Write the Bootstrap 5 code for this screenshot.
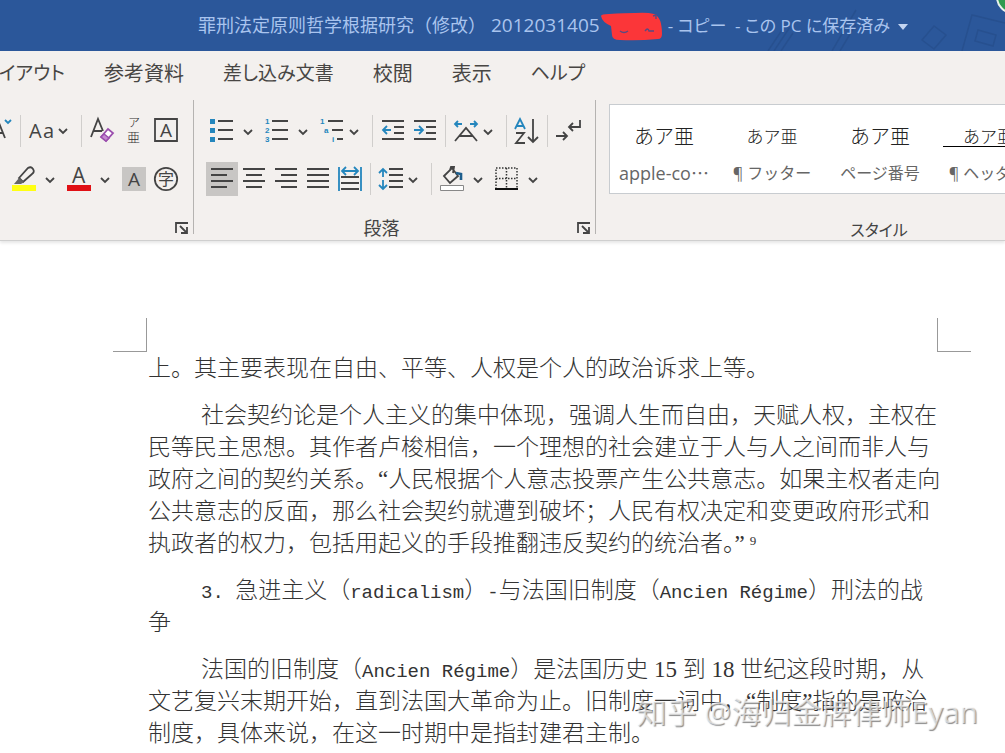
<!DOCTYPE html>
<html lang="ja">
<head>
<meta charset="utf-8">
<meta name="viewport" content="width=device-width, initial-scale=1">
<title>罪刑法定原则哲学根据研究</title>
<link rel="stylesheet" href="https://cdn.jsdelivr.net/npm/bootstrap@5.3.0/dist/css/bootstrap.min.css">
<style>
  body { font-family: "Open Sans", "Noto Sans CJK JP", sans-serif; font-size: 18px; color: #444; background: #fff; overflow-x: hidden; }
  .jp { font-feature-settings: "palt"; }
  .title-bar { height: 51px; background: #2b579a; color: #a9c4ee; padding-left: 198px; overflow: hidden; white-space: nowrap; }
  .title-doc { font-family: "Open Sans", "Noto Sans CJK SC", sans-serif; }
  .title-num { font-size: 19px; margin-left: 5px; }
  .title-state { font-size: 17px; margin-left: 4px; }
  .title-art { position: absolute; right: 0; top: 0; }
  .title-bar button { color: inherit; }
  .ribbon { background: #f3f0ee; border-bottom: 1px solid #cfcfcf; box-shadow: 0 2px 3px #e6e6e6; overflow: hidden; height: 190px; }
  .tabs { gap: 39px; height: 45px; }
  .tabs a { font-size: 20px; color: #484644; white-space: nowrap; }
  .tabs a.kana { font-size: 19px; }
  .tab-cut { width: 65px; overflow: hidden; }
  .tool-group { height: 134px; margin-top: 4px; border-right: 1px solid #b5b3b1; padding-top: 11px; position: relative; }
  .group-font { width: 194px; }
  .group-para { width: 402px; padding-left: 12px; }
  .group-style { width: 540px; margin-left: 13px; padding-top: 4px; border: 0; }
  .tool-row { height: 40px; margin-bottom: 8px; }
  .tool-row button, .launcher { border: 0; padding: 0; background: none; line-height: 0; }
  .tool-row button.on { background: linear-gradient(#c8c6c4, #c8c6c4) center / 100% 34px no-repeat; }
  .tool-sep { width: 4px; height: 32px; background: linear-gradient(#d0cecc, #d0cecc) center / 1px 100% no-repeat; }
  .group-label { position: absolute; left: 0; right: 0; bottom: -8px; text-align: center; }
  .group-para .group-label { right: 26px; }
  .group-style .group-label { font-size: 16px; }
  .launcher { position: absolute; right: 4px; bottom: -1px; }
  .gallery { border: 1px solid #c8ccd0; background: #fff; height: 90px; }
  .gallery button { width: 108px; border: 0; background: none; padding: 16px 0 0; color: #666; white-space: nowrap; }
  .sample { height: 30px; line-height: 30px; color: #222; font-family: "Noto Sans CJK JP", sans-serif; font-weight: 300; font-size: 20px; }
  .sample-sm { font-size: 17px; }
  .sample-line { border-bottom: 1px solid #000; margin: 0 -27px 4px 9px; height: 26px; text-align: left; padding-left: 20px; }
  .style-name { font-size: 16px; line-height: 44px; }
  .style-name.latin { font-size: 18px; }
  .page-area { padding: 77px 34px 0 113px; position: relative; overflow: hidden; min-height: 512px; }
  .corner { width: 34px; height: 34px; border-bottom: 1px solid #999; }
  .corner-l { border-right: 1px solid #999; }
  .corner-r { border-left: 1px solid #999; }
  .doc-text { padding: 1px 0 0 35px; font-family: "Liberation Serif", "Noto Sans CJK SC", serif; font-size: 23px; font-weight: 300; line-height: 32px; color: #333; white-space: nowrap; }
  .doc-text p { margin: 0 0 15px; text-indent: 53px; }
  .doc-text p.cont { text-indent: 0; }
  .doc-text .mono { font-family: "Liberation Mono", monospace; font-size: 19px; line-height: 1; }
  .half { font-feature-settings: "halt"; }
  .doc-text sup { font-size: 13px; line-height: 0; margin-left: 5px; }
  .watermark { position: absolute; right: 27px; bottom: 33px; font-family: "Open Sans", "Noto Sans CJK SC", sans-serif; font-size: 30px; line-height: 40px; color: rgba(255,255,255,.6); text-shadow: 1px 1px 1px rgba(100,100,100,.75); white-space: nowrap; }
  svg text { font-family: "Open Sans", "Noto Sans CJK JP", sans-serif; }
  svg .list-mark text { font-family: "Liberation Sans", sans-serif; font-size: 8px; font-weight: 700; }
  .list-mark { fill: #2486bd; }
  .ink { fill: none; stroke: #444; stroke-width: 1.8; }
  .blu { fill: none; stroke: #2486bd; stroke-width: 1.8; }
</style>
</head>
<body>
<header class="title-bar d-flex align-items-center position-relative">
  <svg class="title-art" width="260" height="51" viewBox="745 0 260 51" fill="none" stroke="#27508f" stroke-width="1.5" aria-hidden="true">
    <path d="M768 51l16-24M774 51l16-24M781 51l12-18M832 51l24-41M840 51l16-27M922 40l12-14 12 9-12 14zM962 51l10-36 33 8M978 30l18 5-3 11-18-5z"/>
    <circle cx="1013" cy="-3" r="16" fill="#2f9a50" stroke="#e8f2ea" stroke-width="2"/>
  </svg>
  <span class="title-doc position-relative" lang="zh-CN">罪刑法定原则哲学根据研究（修改）</span><span class="title-num">2012031405</span>
  <svg width="64" height="30" viewBox="602 12 64 30" class="flex-shrink-0 position-relative" aria-hidden="true"><path d="M603 17q0-2 8-2 16-1 26-1 12-1 19 1 8 3 8 20 0 5-4 5-20 2-38 1-8 0-8-5l-1-9q-9-4-10-10z" fill="#fb3639"/><path d="M622 32q4 3 8 0M647 32q3-4 4 0h5M655 17l3-1v4" fill="none" stroke="#5a4a80" stroke-width="1.4"/></svg>
  <span class="title-state jp position-relative">- コピー&nbsp; - この PC に保存済み</span>
  <button class="btn p-0 border-0 ms-2 lh-1 position-relative" aria-label="メニュー"><svg width="10" height="6"><path d="M0 0h10L5 6z" fill="#c3d5f2"/></svg></button>
</header>

<section class="ribbon">
  <nav class="tabs d-flex align-items-center jp">
    <a href="#" class="kana tab-cut d-flex justify-content-end text-decoration-none">レイアウト</a>
    <a href="#" class="text-decoration-none">参考資料</a>
    <a href="#" class="kana text-decoration-none">差し込み文書</a>
    <a href="#" class="text-decoration-none">校閲</a>
    <a href="#" class="text-decoration-none">表示</a>
    <a href="#" class="kana text-decoration-none">ヘルプ</a>
  </nav>
  <div class="d-flex">
    <div class="tool-group group-font flex-shrink-0">
      <div class="tool-row d-flex align-items-center">
        <button aria-label="フォントの縮小"><svg width="18" height="40" viewBox="0 111 18 40"><path class="ink" d="M-7 138L-1 123l6 15M-4 133h7"/><path class="blu" d="M5 120l3 3 3-3"/></svg></button>
        <span class="tool-sep"></span>
        <button aria-label="文字種の変換"><svg width="57" height="40" viewBox="22 111 57 40"><text x="29" y="138" font-size="20" fill="#444">A</text><text x="43" y="138" font-size="20" fill="#444">a</text><path class="ink" d="M59 129l4 4 4-4"/></svg></button>
        <span class="tool-sep"></span>
        <button aria-label="書式のクリア"><svg width="38" height="40" viewBox="83 111 38 40"><path class="ink" d="M91 137l7-18 5 12M93 131h9"/><path d="M101 137l7-8 5 4-7 8z" fill="#fff" stroke="#9b4fae" stroke-width="1.8"/><path d="M101 137l3-3 5 4-3 3z" fill="#c58ad2" stroke="#9b4fae" stroke-width="1.5"/></svg></button>
        <button aria-label="ルビ"><svg width="28" height="40" viewBox="121 111 28 40" font-weight="300"><text x="128" y="127" font-size="12" fill="#333">ア</text><text x="127" y="142" font-size="13" fill="#333">亜</text></svg></button>
        <button aria-label="囲み線"><svg width="34" height="40" viewBox="149 111 34 40"><path class="ink" d="M155 119h22v22h-22z"/><text x="160" y="137" font-size="19" fill="#444">A</text></svg></button>
      </div>
      <div class="tool-row d-flex align-items-center">
        <button aria-label="蛍光ペン"><svg width="60" height="40" viewBox="0 159 60 40"><path class="ink" d="M19 178l9-10q3-2 5 1t-1 5l-9 8z"/><path d="M14 184l5-6 5 4-3 2z" fill="#666"/><path fill="#ffff13" d="M12 185h24v6H12z"/><path class="ink" d="M46 178l4 4 4-4"/></svg></button>
        <button aria-label="フォントの色"><svg width="56" height="40" viewBox="60 159 56 40"><text x="72" y="183" font-size="21" fill="#444">A</text><path fill="#e01015" d="M67 185h24v6H67z"/><path class="ink" d="M101 178l4 4 4-4"/></svg></button>
        <button aria-label="文字の網かけ"><svg width="34" height="40" viewBox="116 159 34 40"><path fill="#c8c6c4" d="M122 167h24v24h-24z"/><text x="128" y="186" font-size="19" fill="#444">A</text></svg></button>
        <button aria-label="囲い文字"><svg width="33" height="40" viewBox="150 159 33 40"><circle class="ink" cx="166" cy="179" r="11.2"/><text x="158" y="185" font-size="16" fill="#444">字</text></svg></button>
      </div>
      <button class="launcher" aria-label="フォントの設定"><svg width="14" height="14" class="ink"><path d="M1 12V2h12M5 5l6 6M12 6v6H6"/></svg></button>
    </div>

    <div class="tool-group group-para flex-shrink-0">
      <div class="tool-row d-flex align-items-center">
        <button aria-label="箇条書き"><svg width="55" height="40" viewBox="206 111 55 40"><path fill="#2486bd" d="M210 119h5v5h-5zM210 128h5v5h-5zM210 137h5v5h-5z"/><path class="ink" d="M218 121h15M218 130h15M218 139h15M244 130l4 4 4-4"/></svg></button>
        <button aria-label="段落番号"><svg width="55" height="40" viewBox="261 111 55 40"><g class="list-mark"><text x="265" y="124">1</text><text x="265" y="133">2</text><text x="265" y="142">3</text></g><path class="ink" d="M272 121h16M272 130h16M272 139h16M299 130l4 4 4-4"/></svg></button>
        <button aria-label="アウトライン"><svg width="54" height="40" viewBox="316 111 54 40"><g class="list-mark"><text x="320" y="124">1</text><text x="324" y="133">a</text><text x="332" y="142">i</text></g><path class="ink" d="M328 121h15M332 130h11M337 139h6M350 130l4 4 4-4"/></svg></button>
        <span class="tool-sep"></span>
        <button aria-label="インデントを減らす"><svg width="35" height="40" viewBox="374 111 35 40"><path class="ink" d="M382 121h22M394 127h10M394 133h10M382 139h22"/><path class="blu" d="M391 130h-8M387 126l-4 4 4 4"/></svg></button>
        <button aria-label="インデントを増やす"><svg width="34" height="40" viewBox="409 111 34 40"><path class="ink" d="M414 121h22M426 127h10M426 133h10M414 139h22"/><path class="blu" d="M414 130h9M419 126l4 4-4 4"/></svg></button>
        <span class="tool-sep"></span>
        <button aria-label="拡張書式"><svg width="57" height="40" viewBox="447 111 57 40"><path class="ink" d="M455 141l11-13 11 13M459 136h14M484 130l4 4 4-4"/><path class="blu" d="M462 124h-7M458 121l-3 3 3 3M470 124h7M474 121l3 3-3 3"/></svg></button>
        <span class="tool-sep"></span>
        <button aria-label="並べ替え"><svg width="37" height="40" viewBox="508 111 37 40"><path class="blu" d="M515 129l5-10 5 10M517 126h6"/><path class="ink" d="M516 133h8l-8 10h9M533 119v23M528 137l5 5 5-5"/></svg></button>
        <span class="tool-sep"></span>
        <button aria-label="編集記号の表示"><svg width="41" height="40" viewBox="549 111 41 40"><path class="ink" d="M556 136h11M563 132l4 4-4 4M580 120v7h-11M573 123l-4 4 4 4"/></svg></button>
      </div>
      <div class="tool-row d-flex align-items-center">
        <button class="on" aria-label="左揃え"><svg width="32" height="40" viewBox="206 159 32 40"><path class="ink" d="M211 169h22M211 175h16M211 181h22M211 187h16"/></svg></button>
        <button aria-label="中央揃え"><svg width="32" height="40" viewBox="238 159 32 40"><path class="ink" d="M243 169h22M246 175h16M243 181h22M246 187h16"/></svg></button>
        <button aria-label="右揃え"><svg width="32" height="40" viewBox="270 159 32 40"><path class="ink" d="M275 169h22M281 175h16M275 181h22M281 187h16"/></svg></button>
        <button aria-label="両端揃え"><svg width="32" height="40" viewBox="302 159 32 40"><path class="ink" d="M307 169h22M307 175h22M307 181h22M307 187h22"/></svg></button>
        <button aria-label="均等割り付け"><svg width="34" height="40" viewBox="334 159 34 40"><path class="ink" d="M341 177h18M341 183h18M341 189h18"/><path class="blu" d="M339 167v24M361 167v24M342 171h16M346 167l-4 4 4 4M354 167l4 4-4 4"/></svg></button>
        <span class="tool-sep"></span>
        <button aria-label="行と段落の間隔"><svg width="57" height="40" viewBox="372 159 57 40"><path class="ink" d="M389 169h14M389 175h14M389 181h14M389 187h14M409 178l4 4 4-4"/><path class="blu" d="M383 169v8M379 173l4-4 4 4M383 180v9M379 185l4 4 4-4"/></svg></button>
        <span class="tool-sep"></span>
        <button aria-label="塗りつぶし"><svg width="55" height="40" viewBox="433 159 55 40"><path class="ink" d="M444 176l8-8 6 8-8 7zM450 170l1-3h3l-1 6"/><path d="M456 173l5 1v6" fill="none" stroke="#1d5e8d" stroke-width="2.6"/><path d="M440.500 185.500h23v5h-23z" fill="#fff" stroke="#888"/><path class="ink" d="M474 178l4 4 4-4"/></svg></button>
        <button aria-label="罫線"><svg width="57" height="40" viewBox="488 159 57 40"><path d="M496 189v-21h21v21M506.500 168v21M496 178.500h21" fill="none" stroke="#333" stroke-width="1.500" stroke-dasharray="1.500 1.500"/><path d="M495 189h23" stroke="#111" stroke-width="2"/><path class="ink" d="M529 178l4 4 4-4"/></svg></button>
      </div>
      <div class="group-label">段落</div>
      <button class="launcher" aria-label="段落の設定"><svg width="14" height="14" class="ink"><path d="M1 12V2h12M5 5l6 6M12 6v6H6"/></svg></button>
    </div>

    <div class="tool-group group-style flex-shrink-0 jp">
      <div class="gallery d-flex">
        <button><div class="sample">あア亜</div><div class="style-name latin">apple-co⋯</div></button>
        <button><div class="sample sample-sm">あア亜</div><div class="style-name">¶ フッター</div></button>
        <button><div class="sample">あア亜</div><div class="style-name">ページ番号</div></button>
        <button><div class="sample sample-sm sample-line">あア亜</div><div class="style-name">¶ ヘッダー</div></button>
      </div>
      <div class="group-label">スタイル</div>
    </div>
  </div>
</section>

<main class="page-area" lang="zh-CN">
  <div class="d-flex justify-content-between"><span class="corner corner-l"></span><span class="corner corner-r"></span></div>
  <article class="doc-text">
    <p class="cont">上。其主要表现在自由、平等、人权是个人的政治诉求上等。</p>
    <p>社会契约论是个人主义的集中体现，强调人生而自由，天赋人权，主权在<br>民等民主思想。其作者卢梭相信，一个理想的社会建立于人与人之间而非人与<br>政府之间的契约关系。“人民根据个人意志投票产生公共意志。如果主权者走向<br>公共意志的反面，那么社会契约就遭到破坏；人民有权决定和变更政府形式和<br>执政者的权力，包括用起义的手段推翻违反契约的统治者<span class="half">。</span>”<sup>9</sup></p>
    <p><span class="mono">3. </span>急进主义（<span class="mono">radicalism</span>）<span class="mono">-</span>与法国旧制度（<span class="mono">Ancien Régime</span>）刑法的战<br>争</p>
    <p>法国的旧制度（<span class="mono">Ancien Régime</span>）是法国历史 15 到 18 世纪这段时期，从<br>文艺复兴末期开始，直到法国大革命为止。旧制度一词中，“制度”指的是政治<br>制度，具体来说，在这一时期中是指封建君主制。</p>
  </article>
  <div class="watermark">知乎 @海归金牌律师Eyan</div>
</main>
<script src="https://cdn.jsdelivr.net/npm/bootstrap@5.3.0/dist/js/bootstrap.bundle.min.js"></script>
</body>
</html>
